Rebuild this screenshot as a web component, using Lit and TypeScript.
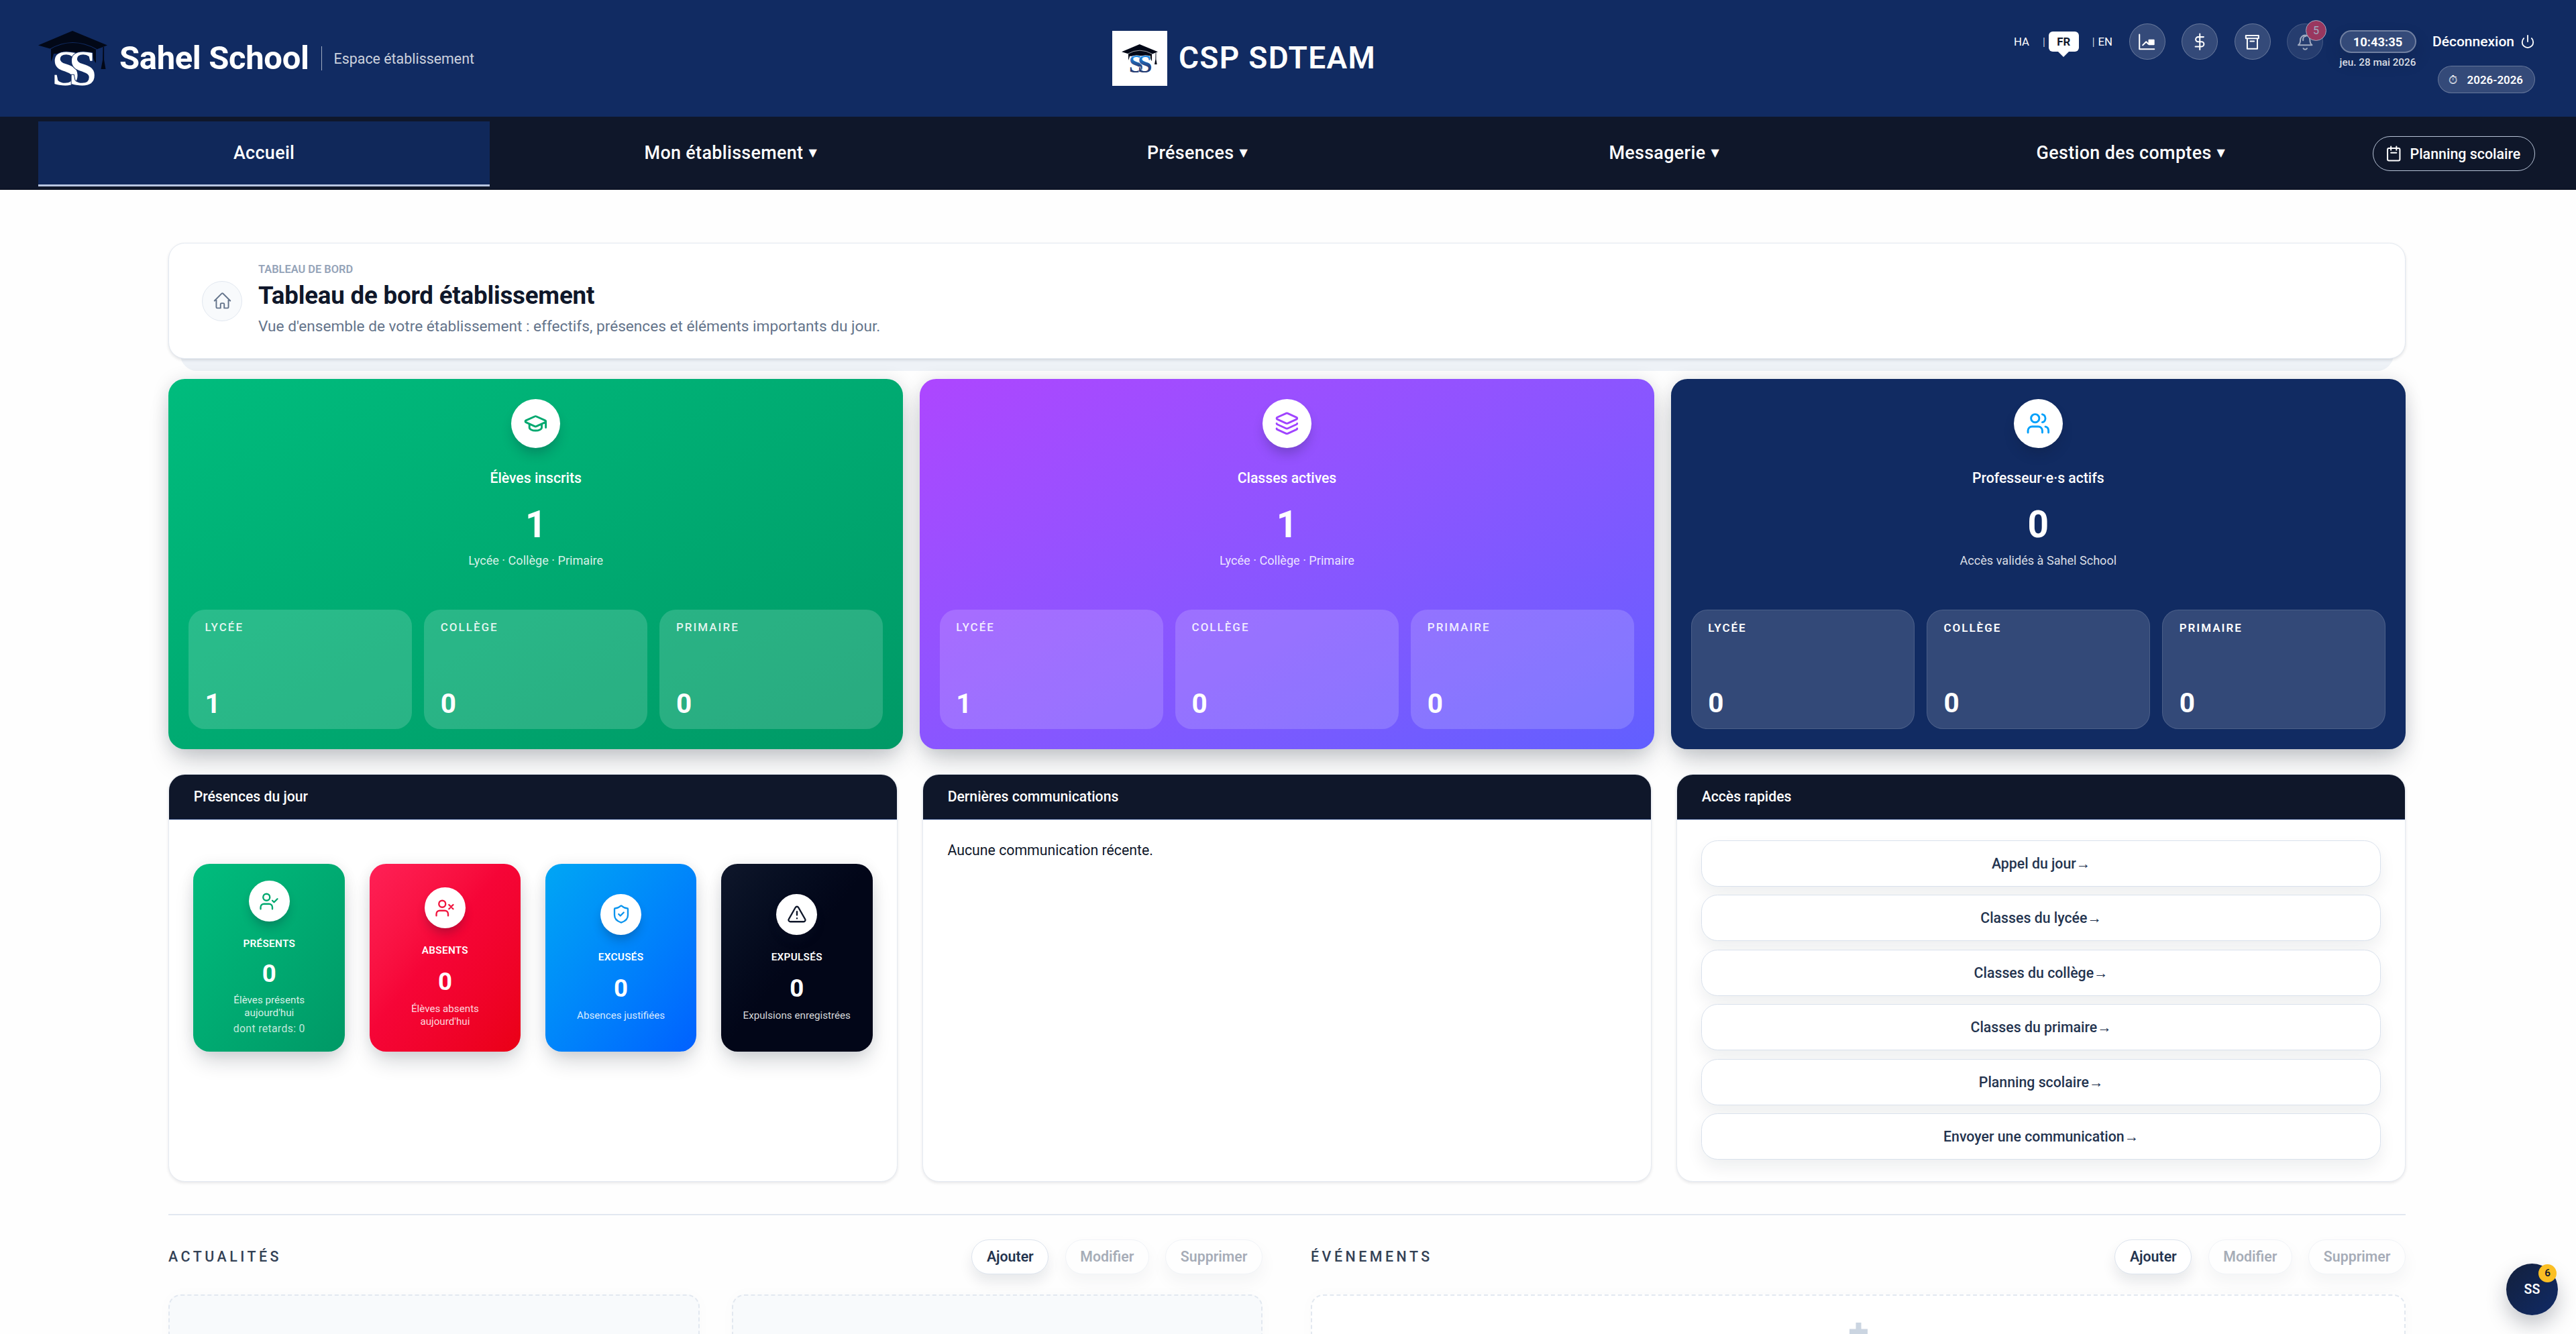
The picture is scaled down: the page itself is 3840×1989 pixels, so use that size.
import { LitElement, html, css, svg } from 'lit'
import { customElement, property } from 'lit/decorators.js'
import { classMap } from 'lit/directives/class-map.js'

const icons = {
  chart: svg`<path d="M1.2 1.4v21.4h21.6M6 17l5-5 3.2 3.2 4.2-4.4"/><path fill="currentColor" d="M15.2 9.6h7v6.4h-7z"/>`,
  dollar: svg`<path d="M12 0.5v23M17.5 5H9.5a3.5 3.5 0 0 0 0 7h5a3.5 3.5 0 0 1 0 7H5.5"/>`,
  archive: svg`<path d="M2.8 3h18.6v4H2.8zM4.8 7v15.2h14.8V7M9.2 11.2h5.6"/>`,
  bell: svg`<path d="M2 16.8c2-1.4 3-3.6 3-7.3a7 7 0 0 1 14 0c0 3.7 1 5.9 3 7.3zM9.4 21.8a3 3 0 0 0 5.2 0M9 10V8a4 4 0 0 1 4-4"/>`,
  power: svg`<path d="M12 2v10M18.4 6.6a9 9 0 1 1-12.8 0"/>`,
  calendar: svg`<path d="M5 4h14a2 2 0 0 1 2 2v14a2 2 0 0 1-2 2H5a2 2 0 0 1-2-2V6a2 2 0 0 1 2-2zM8 1.5v5M16 1.5v5M8 10.5h8"/>`,
  home: svg`<path d="m2.25 12 8.95-8.95c.44-.44 1.15-.44 1.6 0L21.75 12M4.5 9.75v10.1c0 .63.5 1.15 1.13 1.15h4.12v-4.9c0-.6.5-1.1 1.13-1.1h2.24c.63 0 1.13.5 1.13 1.1V21h4.12c.63 0 1.13-.5 1.13-1.15V9.75"/>`,
  cap: svg`<path d="M21.42 10.92a1 1 0 0 0-.02-1.84L12.83 5.2a2 2 0 0 0-1.66 0L2.6 9.08a1 1 0 0 0 0 1.83l8.57 3.91a2 2 0 0 0 1.66 0zM22 10v6M6 12.5V16a6 3 0 0 0 12 0v-3.5"/>`,
  layers: svg`<path d="M12.83 2.18a2 2 0 0 0-1.66 0L2.6 6.08a1 1 0 0 0 0 1.83l8.58 3.91a2 2 0 0 0 1.66 0l8.58-3.9a1 1 0 0 0 0-1.83zM2 12a1 1 0 0 0 .58.91l8.6 3.91a2 2 0 0 0 1.65 0l8.58-3.9A1 1 0 0 0 22 12M2 17a1 1 0 0 0 .58.91l8.6 3.91a2 2 0 0 0 1.65 0l8.58-3.9A1 1 0 0 0 22 17"/>`,
  users: svg`<path d="M16 21v-2a4 4 0 0 0-4-4H6a4 4 0 0 0-4 4v2M16 3.13a4 4 0 0 1 0 7.74M22 21v-2a4 4 0 0 0-3-3.87"/><circle cx="9" cy="7" r="4"/>`,
  userCheck: svg`<path d="m16 11 2 2 4-4M16 21v-2a4 4 0 0 0-4-4H6a4 4 0 0 0-4 4v2"/><circle cx="9" cy="7" r="4"/>`,
  userX: svg`<path d="M16 21v-2a4 4 0 0 0-4-4H6a4 4 0 0 0-4 4v2M17 8l5 5M22 8l-5 5"/><circle cx="9" cy="7" r="4"/>`,
  shield: svg`<path d="M20 13c0 5-3.5 7.5-7.66 8.95a1 1 0 0 1-.67-.01C7.5 20.5 4 18 4 13V6a1 1 0 0 1 1-1c2 0 4.5-1.2 6.24-2.72a1.17 1.17 0 0 1 1.52 0C14.51 3.81 17 5 19 5a1 1 0 0 1 1 1zM9 12l2 2 4-4"/>`,
  alert: svg`<path d="m21.73 18-8-14a2 2 0 0 0-3.48 0l-8 14A2 2 0 0 0 4 21h16a2 2 0 0 0 1.73-3M12 9v4M12 17h.01"/>`,
}

type IconName = keyof typeof icons

@customElement('ui-icon')
export class UiIcon extends LitElement {
  @property() name: IconName = 'home'

  static styles = css`
    :host { display: block; width: 24.5px; height: 24.5px; }
    svg {
      display: block;
      width: 100%;
      height: 100%;
      fill: none;
      stroke: currentColor;
      stroke-width: var(--stroke, 2);
      stroke-linecap: round;
      stroke-linejoin: round;
      overflow: visible;
    }
  `

  render() {
    return html`<svg viewBox="0 0 24 24">${icons[this.name]}</svg>`
  }
}

@customElement('school-logo')
export class SchoolLogo extends LitElement {
  @property({ type: Boolean }) tinted = false

  static styles = css`
    :host { display: block; }
    svg { display: block; width: 100%; height: 100%; overflow: visible; }
    .cap { fill: #020817; }
    .arc { fill: none; stroke: #112b62; stroke-width: 1.2; }
    text {
      font: 700 74px "Liberation Serif", serif;
      fill: #fff;
      stroke: #112b62;
      stroke-width: 2;
      paint-order: stroke;
    }
    .tinted .arc { stroke: #fff; }
    .tinted text { fill: url(#tint); stroke: #fff; }
  `

  render() {
    return html`
      <svg viewBox="0 0 103 82" class=${this.tinted ? 'tinted' : ''}>
        <defs>
          <linearGradient id="tint" x1="0" y1="0" x2="0" y2="1">
            <stop offset="0.2" stop-color="#1d93f5" />
            <stop offset="0.6" stop-color="#27437f" />
            <stop offset="1" stop-color="#1d2f60" />
          </linearGradient>
        </defs>
        <path class="cap" d="M0 21.5 51 0l52 21.5L86 28v20q-4-4-5-14H23q-2 8-4 12V27z" />
        <path class="arc" d="M17 27.5q34-20 70 0" />
        <path class="cap" d="M96.5 24h1.6v19l2.4 14h-7l2.6-14z" />
        <text x="20.5" y="80.5">S<tspan dx="-16">S</tspan></text>
      </svg>
    `
  }
}

@customElement('top-bar')
export class TopBar extends LitElement {
  static styles = css`
    :host {
      display: flex;
      align-items: center;
      justify-content: space-between;
      height: 174px;
      padding: 0 61px 0 57px;
      box-sizing: border-box;
      background: #112b62;
      color: #fff;
    }
    .brand, .school, .actions, .langs, .logout, .year { display: flex; align-items: center; }
    .brand school-logo { width: 103px; height: 82px; }
    .name { margin-left: 18px; font-size: 49px; font-weight: 700; line-height: 54px; letter-spacing: -0.36px; }
    .space {
      display: flex;
      align-items: center;
      height: 36px;
      margin-left: 18px;
      padding-left: 18px;
      border-left: 1.5px solid rgb(255 255 255 / 0.6);
      font-size: 21.4px;
      color: rgb(255 255 255 / 0.8);
    }
    .frame { display: grid; place-items: center; width: 82px; height: 82px; background: #fff; }
    .frame school-logo { width: 54px; height: 43px; }
    .title { margin-left: 17px; font-size: 46px; font-weight: 600; line-height: 54px; letter-spacing: 1.3px; padding-bottom: 2px; }
    .actions { align-items: flex-start; gap: 24.5px; height: 104px; }
    .langs { height: 30px; padding-top: 12px; font-size: 16.8px; }
    .sep { margin: 0 5px 0 20px; font-weight: 300; }
    .current {
      position: relative;
      display: grid;
      place-items: center;
      width: 45px;
      height: 30px;
      border-radius: 6px;
      background: #fff;
      color: #0f172a;
      font-weight: 700;
    }
    .current::after {
      content: '';
      position: absolute;
      top: 29px;
      border: 9px solid transparent;
      border-bottom: 0;
      border-top-color: #fff;
    }
    .round {
      position: relative;
      display: grid;
      place-items: center;
      width: 54px;
      height: 54px;
      box-sizing: border-box;
      border: 1.5px solid rgb(255 255 255 / 0.25);
      border-radius: 50%;
      background: rgb(255 255 255 / 0.15);
    }
    .round.muted { opacity: 0.6; }
    .badge {
      position: absolute;
      top: -6px;
      right: -6px;
      display: grid;
      place-items: center;
      width: 31px;
      height: 31px;
      box-sizing: border-box;
      border: 1.5px solid #fff;
      border-radius: 50%;
      background: #f43f5e;
      font-size: 16px;
    }
    .clock { padding-top: 10px; text-align: center; }
    .time {
      width: 114px;
      height: 34px;
      box-sizing: border-box;
      border: 2px solid rgb(255 255 255 / 0.3);
      border-radius: 17px;
      background: rgb(255 255 255 / 0.15);
      box-shadow: 0 12px 24px rgb(15 23 42 / 0.2);
      font-size: 18.4px;
      font-weight: 700;
      line-height: 31px;
    }
    .date { margin-top: 5px; font-size: 15.3px; font-weight: 500; line-height: 18px; color: rgb(255 255 255 / 0.85); white-space: nowrap; }
    .side { display: flex; flex-direction: column; align-items: flex-end; padding-top: 14px; }
    .logout { gap: 9px; height: 26px; font-size: 21px; font-weight: 500; }
    .logout ui-icon { width: 22px; height: 22px; }
    .year {
      gap: 12px;
      width: 145px;
      height: 41px;
      margin-top: 23px;
      padding: 0 17px 0 15px;
      justify-content: space-between;
      box-sizing: border-box;
      border: 1.5px solid rgb(255 255 255 / 0.25);
      border-radius: 21px;
      background: rgb(255 255 255 / 0.15);
      font-size: 16.9px;
      font-weight: 600;
    }
    .watch { font-weight: 400; font-size: 17px; }
  `

  render() {
    return html`
      <div class="brand">
        <school-logo></school-logo>
        <span class="name">Sahel School</span>
        <span class="space">Espace établissement</span>
      </div>
      <div class="school">
        <div class="frame"><school-logo tinted></school-logo></div>
        <span class="title">CSP SDTEAM</span>
      </div>
      <div class="actions">
        <div class="langs">
          <span>HA</span><span class="sep">|</span>
          <span class="current">FR</span><span class="sep">|</span>
          <span>EN</span>
        </div>
        <div class="round"><ui-icon name="chart"></ui-icon></div>
        <div class="round"><ui-icon name="dollar"></ui-icon></div>
        <div class="round"><ui-icon name="archive"></ui-icon></div>
        <div class="round muted"><ui-icon name="bell"></ui-icon><span class="badge">5</span></div>
        <div class="clock">
          <div class="time">10:43:35</div>
          <div class="date">jeu. 28 mai 2026</div>
        </div>
        <div class="side">
          <div class="logout">Déconnexion <ui-icon name="power"></ui-icon></div>
          <div class="year"><span class="watch">⏱</span><span>2026-2026</span></div>
        </div>
      </div>
    `
  }
}

@customElement('main-nav')
export class MainNav extends LitElement {
  static styles = css`
    :host {
      display: flex;
      align-items: flex-start;
      gap: 24px;
      height: 109px;
      padding: 7px 61px 0 57px;
      box-sizing: border-box;
      border-bottom: 1px solid #020817;
      background: #0f172a;
      color: #fff;
    }
    .tabs { display: flex; flex: 1; gap: 22.5px; }
    .tab {
      flex: 1;
      display: flex;
      align-items: center;
      justify-content: center;
      gap: 8px;
      height: 97px;
      box-sizing: border-box;
      padding-bottom: 1px;
      border-bottom: 3px solid transparent;
      font-size: 26.9px;
      font-weight: 500;
      letter-spacing: 0.35px;
    }
    .tab.active { background: #10285a; border-bottom-color: #b8c5e0; }
    .caret { font-family: "DejaVu Sans", sans-serif; font-size: 16px; }
    .planning {
      display: flex;
      align-items: center;
      gap: 12px;
      width: 242px;
      height: 52px;
      margin-top: 22px;
      padding: 0 18px;
      box-sizing: border-box;
      border: 1.5px solid #b6c2d6;
      border-radius: 26px;
      font-size: 21.4px;
      font-weight: 500;
      white-space: nowrap;
    }
  `

  private tabs = [
    { label: 'Accueil', menu: false },
    { label: 'Mon établissement', menu: true },
    { label: 'Présences', menu: true },
    { label: 'Messagerie', menu: true },
    { label: 'Gestion des comptes', menu: true },
  ]

  render() {
    return html`
      <div class="tabs">
        ${this.tabs.map((t, i) => html`
          <div class=${classMap({ tab: true, active: i === 0 })}>
            ${t.label}${t.menu ? html`<span class="caret">▼</span>` : ''}
          </div>
        `)}
      </div>
      <div class="planning"><ui-icon name="calendar"></ui-icon>Planning scolaire</div>
    `
  }
}

@customElement('stat-card')
export class StatCard extends LitElement {
  @property() icon: IconName = 'cap'
  @property() label = ''
  @property() value = ''
  @property() note = ''
  @property({ attribute: false }) levels: string[] = []
  @property({ reflect: true }) tone = 'green'

  static styles = css`
    :host {
      display: flex;
      flex-direction: column;
      align-items: center;
      height: 552.5px;
      padding: 30px;
      box-sizing: border-box;
      border-radius: 24.5px;
      box-shadow: 0 24px 38px -8px rgb(15 23 42 / 0.2), 0 2px 26px rgb(15 23 42 / 0.13);
      color: #fff;
    }
    :host([tone='green']) { background: linear-gradient(to bottom right in oklab, #00bc7d, #009966); --accent: #00a86f; }
    :host([tone='purple']) { background: linear-gradient(to bottom right in oklab, #ad46ff, #615fff); --accent: #a044ff; }
    :host([tone='navy']) { background: #112b62; --accent: #00a0fa; }
    .disc {
      display: grid;
      place-items: center;
      width: 73px;
      height: 73px;
      border-radius: 50%;
      background: #fff;
      color: var(--accent);
      box-shadow: 0 12px 18px -4px rgb(15 23 42 / 0.25);
      --stroke: 1.9;
    }
    .disc ui-icon { width: 36.7px; height: 36.7px; }
    .label { margin-top: 30px; font-size: 21.2px; font-weight: 500; line-height: 30px; }
    .value { margin-top: 27px; font-size: 55px; font-weight: 700; line-height: 55px; }
    .note { margin-top: 14.5px; font-size: 18.1px; line-height: 24px; color: rgb(255 255 255 / 0.85); }
    .levels { display: grid; grid-template-columns: repeat(3, 1fr); gap: 18.4px; width: 100%; margin-top: auto; }
    .level {
      display: flex;
      flex-direction: column;
      justify-content: space-between;
      height: 178px;
      padding: 13px 24.5px 14px;
      box-sizing: border-box;
      border-radius: 24.5px;
      background: rgb(255 255 255 / 0.16);
    }
    .level span { font-size: 17px; font-weight: 500; line-height: 26px; letter-spacing: 2px; color: rgb(255 255 255 / 0.88); }
    .level b { font-size: 40.5px; line-height: 48px; }
    :host([tone='navy']) .level { border: 1.5px solid rgb(255 255 255 / 0.12); background: rgb(255 255 255 / 0.145); }
    :host([tone='navy']) .level span { font-weight: 600; color: #fff; }
  `

  render() {
    const names = ['LYCÉE', 'COLLÈGE', 'PRIMAIRE']
    return html`
      <div class="disc"><ui-icon name=${this.icon}></ui-icon></div>
      <div class="label">${this.label}</div>
      <div class="value">${this.value}</div>
      <div class="note">${this.note}</div>
      <div class="levels">
        ${names.map((n, i) => html`<div class="level"><span>${n}</span><b>${this.levels[i]}</b></div>`)}
      </div>
    `
  }
}

@customElement('attendance-card')
export class AttendanceCard extends LitElement {
  @property() icon: IconName = 'userCheck'
  @property() label = ''
  @property() note = ''
  @property() extra = ''
  @property({ reflect: true }) tone = 'green'

  static styles = css`
    :host {
      display: flex;
      flex-direction: column;
      align-items: center;
      justify-content: center;
      height: 280px;
      padding: 0 24.5px;
      box-sizing: border-box;
      border-radius: 24.5px;
      box-shadow: 0 18px 32px -6px rgb(15 23 42 / 0.2), 0 0 20px rgb(15 23 42 / 0.07);
      color: #fff;
      text-align: center;
    }
    :host([tone='green']) { background: linear-gradient(to bottom right in oklab, #00bc7d, #009966); --accent: #00a86f; }
    :host([tone='red']) { background: linear-gradient(to bottom right in oklab, #ff2056, #f60537 45%, #ea0015); --accent: #f0163f; }
    :host([tone='blue']) { background: linear-gradient(to bottom right in oklab, #00a6f4, #0560ff); --accent: #0d95ee; }
    :host([tone='dark']) { background: linear-gradient(to bottom right in oklab, #0f172b, #020618 50%); --accent: #0f172a; }
    .disc {
      display: grid;
      place-items: center;
      width: 61px;
      height: 61px;
      border-radius: 50%;
      background: #fff;
      color: var(--accent);
      box-shadow: 0 10px 16px -4px rgb(15 23 42 / 0.3);
      --stroke: 1.9;
    }
    .disc ui-icon { width: 30px; height: 30px; }
    .label { margin-top: 22px; font-size: 15.3px; font-weight: 600; line-height: 22px; letter-spacing: 0.3px; }
    .value { margin-top: 17px; font-size: 36.7px; font-weight: 700; line-height: 38px; }
    .note { margin-top: 12px; font-size: 15.2px; line-height: 19px; white-space: pre-line; color: rgb(255 255 255 / 0.85); }
    .extra { margin-top: 4px; font-size: 15.9px; line-height: 19px; letter-spacing: 0.3px; color: rgb(255 255 255 / 0.75); }
    :host([tone='green']) .value { margin-top: 15px; }
    :host([tone='green']) .note { margin-top: 11px; }
  `

  render() {
    return html`
      <div class="disc"><ui-icon name=${this.icon}></ui-icon></div>
      <div class="label">${this.label}</div>
      <div class="value">0</div>
      <div class="note">${this.note}</div>
      ${this.extra ? html`<div class="extra">${this.extra}</div>` : ''}
    `
  }
}

@customElement('dash-panel')
export class DashPanel extends LitElement {
  @property() heading = ''

  static styles = css`
    :host {
      display: block;
      height: 608px;
      box-sizing: border-box;
      border: 1.5px solid #e5eaf1;
      border-radius: 24.5px;
      background: #fff;
      box-shadow: 0 2px 4px rgb(15 23 42 / 0.1);
      overflow: hidden;
    }
    header {
      height: 67px;
      padding: 0 36.7px;
      background: #0f172a;
      border-bottom: 1.5px solid #112b62;
      box-sizing: border-box;
      color: #fff;
      font-size: 21.2px;
      font-weight: 500;
      line-height: 65px;
    }
    .body { padding: 31px 36.4px; }
  `

  render() {
    return html`<header>${this.heading}</header><div class="body"><slot></slot></div>`
  }
}

@customElement('feed-head')
export class FeedHead extends LitElement {
  @property() heading = ''

  static styles = css`
    :host { display: flex; align-items: center; justify-content: space-between; }
    h3 { margin: 0; font-size: 21.4px; font-weight: 500; letter-spacing: 4.5px; color: #334155; }
    .buttons { display: flex; gap: 24.5px; }
    .btn {
      height: 52px;
      padding: 0 21.5px;
      box-sizing: border-box;
      border: 1.5px solid #dde4ee;
      border-radius: 26px;
      background: #fff;
      box-shadow: 0 12px 20px rgb(15 23 42 / 0.09);
      color: #24344f;
      font-size: 21.3px;
      font-weight: 600;
      line-height: 49px;
    }
    .btn.off { opacity: 0.4; }
  `

  render() {
    return html`
      <h3>${this.heading}</h3>
      <div class="buttons">
        <span class="btn">Ajouter</span>
        <span class="btn off">Modifier</span>
        <span class="btn off">Supprimer</span>
      </div>
    `
  }
}

@customElement('app-root')
export class AppRoot extends LitElement {
  static styles = css`
    :host {
      display: block;
      position: relative;
      height: 1989px;
      overflow: hidden;
      background: #fefefe;
      font-family: Roboto, "DejaVu Sans", sans-serif;
      color: #0f172a;
    }
    main { width: 3335px; margin-left: 251px; padding-top: 79px; isolation: isolate; }
    .intro {
      position: relative;
      display: flex;
      align-items: center;
      gap: 24px;
      height: 173px;
      padding: 0 49px;
      box-sizing: border-box;
      border: 1.5px solid #e2e8f0;
      border-radius: 24.5px;
      background: #fff;
      box-shadow: 0 2px 4px rgb(15 23 42 / 0.12);
    }
    .intro::after {
      content: '';
      position: absolute;
      z-index: -1;
      left: 17px;
      right: 17px;
      bottom: -19px;
      height: 60px;
      border-radius: 0 0 24.5px 24.5px;
      background: #eef2f7;
    }
    .intro-icon {
      display: grid;
      place-items: center;
      width: 60px;
      height: 60px;
      box-sizing: border-box;
      border: 1.5px solid #e2e8f0;
      border-radius: 50%;
      background: #f8fafc;
      color: #64748b;
      --stroke: 1.6;
    }
    .intro-icon ui-icon { width: 29px; height: 29px; }
    .intro-text { padding-bottom: 4px; }
    .eyebrow { font-size: 16.4px; font-weight: 600; line-height: 24px; color: #94a3b8; }
    h1 { margin: 5px 0 8px; font-size: 36.7px; font-weight: 700; line-height: 44px; letter-spacing: -0.2px; }
    .lead { font-size: 22.65px; line-height: 32px; color: #64748b; }
    .stats { display: grid; grid-template-columns: repeat(3, 1fr); gap: 24.5px; margin-top: 29.5px; }
    .panels { display: grid; grid-template-columns: repeat(3, 1fr); gap: 37px; margin-top: 37px; }
    .attendance { display: grid; grid-template-columns: repeat(4, 1fr); gap: 36.4px; padding-top: 35px; }
    .empty { font-size: 21.3px; line-height: 30px; color: #0f172a; }
    .links { display: grid; gap: 12.4px; }
    .link {
      height: 69px;
      box-sizing: border-box;
      border: 1.5px solid #d9e1ec;
      border-radius: 24.5px;
      background: #fff;
      box-shadow: 0 12px 24px rgb(15 23 42 / 0.07);
      color: #24344f;
      font-size: 21.3px;
      font-weight: 500;
      line-height: 67px;
      text-align: center;
    }
    .arrow { font-family: "Liberation Serif", serif; font-weight: 400; line-height: 1; }
    .feeds {
      display: grid;
      grid-template-columns: 1631px 1632px;
      column-gap: 72px;
      row-gap: 30px;
      margin-top: 47.5px;
      padding-top: 36px;
      border-top: 2px solid #e2e8f0;
    }
    .cards { display: grid; grid-template-columns: 1fr 1fr; gap: 48px; }
    .card {
      height: 300px;
      box-sizing: border-box;
      border: 2px dashed #e2e8f0;
      border-radius: 18.4px;
      background: #f8fafc;
      box-shadow: 0 0 24px rgb(15 23 42 / 0.02);
    }
    .card.blank { background: #fff; }
    .card svg { display: block; width: 27px; height: 27px; margin: 40px auto 0; fill: #cbd5e1; }
    .chat {
      position: absolute;
      left: 3736px;
      top: 1884px;
      display: grid;
      place-items: center;
      width: 77px;
      height: 77px;
      border-radius: 50%;
      background: linear-gradient(135deg, #13203c, #102a66);
      box-shadow: 0 14px 30px rgb(15 23 42 / 0.25);
      color: #fff;
      font-size: 19.5px;
      font-weight: 600;
    }
    .count {
      position: absolute;
      top: 1px;
      right: 2px;
      width: 27px;
      height: 27px;
      border-radius: 50%;
      background: #fbbf24;
      color: #0f172a;
      font-size: 15.3px;
      line-height: 27px;
      text-align: center;
    }
  `

  private links = [
    'Appel du jour',
    'Classes du lycée',
    'Classes du collège',
    'Classes du primaire',
    'Planning scolaire',
    'Envoyer une communication',
  ]

  render() {
    return html`
      <top-bar></top-bar>
      <main-nav></main-nav>
      <main>
        <section class="intro">
          <div class="intro-icon"><ui-icon name="home"></ui-icon></div>
          <div class="intro-text">
            <div class="eyebrow">TABLEAU DE BORD</div>
            <h1>Tableau de bord établissement</h1>
            <div class="lead">Vue d'ensemble de votre établissement : effectifs, présences et éléments importants du jour.</div>
          </div>
        </section>

        <section class="stats">
          <stat-card tone="green" icon="cap" label="Élèves inscrits" value="1" note="Lycée · Collège · Primaire" .levels=${['1', '0', '0']}></stat-card>
          <stat-card tone="purple" icon="layers" label="Classes actives" value="1" note="Lycée · Collège · Primaire" .levels=${['1', '0', '0']}></stat-card>
          <stat-card tone="navy" icon="users" label="Professeur·e·s actifs" value="0" note="Accès validés à Sahel School" .levels=${['0', '0', '0']}></stat-card>
        </section>

        <section class="panels">
          <dash-panel heading="Présences du jour">
            <div class="attendance">
              <attendance-card tone="green" icon="userCheck" label="PRÉSENTS" .note=${'Élèves présents\naujourd\'hui'} extra="dont retards: 0"></attendance-card>
              <attendance-card tone="red" icon="userX" label="ABSENTS" .note=${'Élèves absents\naujourd\'hui'}></attendance-card>
              <attendance-card tone="blue" icon="shield" label="EXCUSÉS" note="Absences justifiées"></attendance-card>
              <attendance-card tone="dark" icon="alert" label="EXPULSÉS" note="Expulsions enregistrées"></attendance-card>
            </div>
          </dash-panel>
          <dash-panel heading="Dernières communications">
            <div class="empty">Aucune communication récente.</div>
          </dash-panel>
          <dash-panel heading="Accès rapides">
            <div class="links">
              ${this.links.map((l) => html`<div class="link">${l}<span class="arrow">→</span></div>`)}
            </div>
          </dash-panel>
        </section>

        <section class="feeds">
          <feed-head heading="ACTUALITÉS"></feed-head>
          <feed-head heading="ÉVÉNEMENTS"></feed-head>
          <div class="cards"><div class="card"></div><div class="card"></div></div>
          <div class="card blank">
            <svg viewBox="0 0 27 27"><path d="M9.5 0h8v9.5H27v8h-9.5V27h-8v-9.5H0v-8h9.5z" /></svg>
          </div>
        </section>
      </main>
      <div class="chat">SS<span class="count">6</span></div>
    `
  }
}
